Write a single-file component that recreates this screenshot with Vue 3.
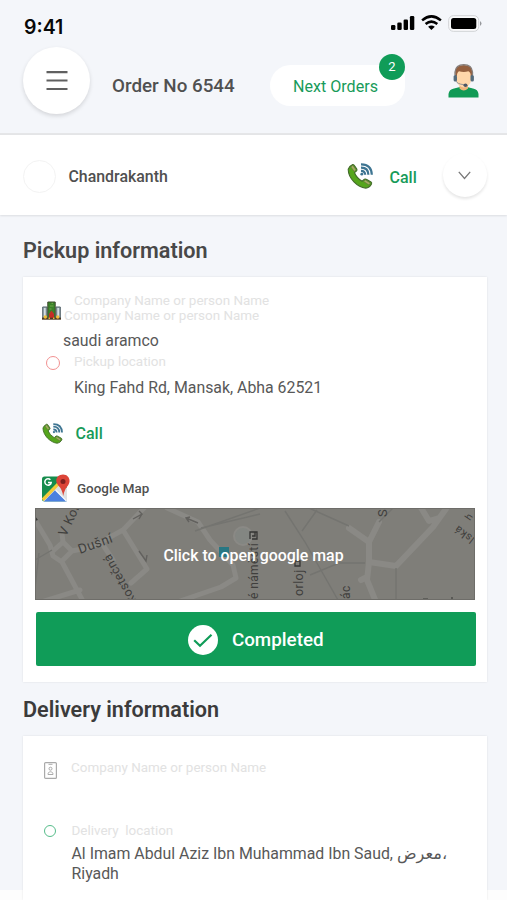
<script setup>
import { h } from 'vue'

const bars = [[0, 10, 5], [6.3, 7.5, 7.5], [12.6, 4.5, 10.5], [18.9, 1, 14]]

// Handset with radiating signal arcs, shared by both call buttons
const PhoneIcon = () =>
  h('svg', { viewBox: '0 0 26 26', width: '100%', height: '100%' }, [
    h('path', {
      d: 'M1.2 6.2 Q2.4 2.9 5.7 1.5 Q6.8 1.3 7.6 2.7 L9.9 6.3 Q10.2 7.4 9.3 8.2 L7.5 9.7 Q9.5 14.8 15.1 18.2 L17.4 16.2 Q18.3 15.7 19.3 16.3 L24 18.9 Q25.1 19.7 24.5 21 Q22.3 25 18.8 25.1 C10.5 24.2 1.3 15.4 1.2 6.2 Z',
      fill: '#55a51c', stroke: '#426b2a', 'stroke-width': 1.1
    }),
    h('path', {
      d: 'M5.8 2.3 L9.1 6.8 L7.2 8.4 L3.8 3.9 Z M18.4 16.9 L23.4 20 L22 22 L16.7 18.5 Z',
      fill: '#a7ad63', stroke: '#59713b', 'stroke-width': 0.6
    }),
    h('path', {
      d: 'M14 1.3 Q24.5 1.2 24.8 11.8 M14 4.6 Q21.2 4.5 21.4 11.8 M14 7.8 Q18 7.9 18.2 11.8',
      fill: 'none', stroke: '#3e7592', 'stroke-width': 2.2
    }),
    h('circle', { cx: 14.8, cy: 11.2, r: 1.4, fill: '#3e7592' })
  ])
</script>

<template>
  <div class="screen">
    <header class="header">
      <div class="status">
        <span class="time">9:41</span>
        <div class="status-icons">
          <svg width="24" height="16" viewBox="0 0 24 16">
            <rect v-for="b in bars" :key="b[0]" :x="b[0]" :y="b[1]" width="4.4" :height="b[2]" rx="1.3" />
          </svg>
          <svg class="wifi" width="21" height="16" viewBox="0 0 21 16" fill="none" stroke="#000" stroke-width="2.5">
            <path d="M1.1 5.4 Q10.4 -2.6 19.9 5.4" />
            <path d="M4.6 9 Q10.4 4.2 16.3 9" />
            <path d="M7.1 11.7 Q10.4 9.1 13.8 11.7 L10.4 15.1 Z" fill="#000" stroke="none" />
          </svg>
          <svg class="battery" width="34" height="17" viewBox="0 0 34 17">
            <rect x=".7" y=".7" width="30" height="15.6" rx="4.6" fill="#fafbfc" stroke="#d0d2d5" />
            <rect x="3" y="3" width="25.3" height="11" rx="2.5" />
            <path d="M32 6 Q35 8.5 32 11Z" fill="#96989c" />
          </svg>
        </div>
      </div>
      <div class="toolbar">
        <button class="menu">
          <svg width="22" height="20" viewBox="0 0 22 20" stroke="#606060" stroke-width="2.2">
            <path d="M.5 1.2H21.5M.5 9.5H21.5M.5 18H21.5" />
          </svg>
        </button>
        <h1 class="order">Order No 6544</h1>
        <button class="next">Next Orders<span class="badge">2</span></button>
        <svg class="agent" width="31" height="35" viewBox="0 0 31 35">
          <path d="M.5 33.5 V30 Q1 25.2 6 24.4 L12 23 H19 L25 24.4 Q30 25.2 30.5 30 V33.5Z" fill="#109a55" />
          <path d="M11.5 20H20V24.5Q15.7 28.5 11.5 24.5Z" fill="#edb57c" />
          <path d="M8 10 Q8 3 15.8 3 Q23.5 3 23.5 10 V15 Q22 23 15.8 23.5 Q9.6 23 8 15Z" fill="#ffd7aa" />
          <path d="M7.2 12 V7 Q8 1.2 15.8 1 Q23.5 1.2 24.3 7 V12 L22.7 12 Q22.8 8.2 20.4 7.3 Q15.8 8.5 11 7.3 Q9 8.2 8.9 12Z" fill="#95603f" />
          <path d="M7 11 V8 Q7.7 .8 15.8 .7 Q23.8 .8 24.5 8 V11" fill="none" stroke="#857e7b" stroke-width="1.3" />
          <rect x="5.6" y="11" width="3.4" height="6.6" rx="1.5" fill="#536b7c" />
          <rect x="22.5" y="11" width="3.4" height="6.6" rx="1.5" fill="#536b7c" />
          <path d="M8 17 Q9 20 16 20.7" fill="none" stroke="#939394" />
          <ellipse cx="17.5" cy="21.2" rx="2" ry="1.8" fill="#4c5564" />
        </svg>
      </div>
    </header>

    <section class="customer">
      <span class="avatar"></span>
      <span class="customer-name">Chandrakanth</span>
      <span class="phone-lg"><PhoneIcon /></span>
      <span class="call call-top">Call</span>
      <button class="expand">
        <svg width="13" height="9" viewBox="0 0 13 9" fill="none" stroke="#777" stroke-width="1.3"><path d="M.8 .8 6.5 7.4 12.2 .8" /></svg>
      </button>
    </section>

    <main class="content">
      <h2 class="title pickup-title">Pickup information</h2>
      <section class="card pickup">
        <div class="company">
          <svg class="building" width="19" height="19" viewBox="0 0 19 19">
            <path d="M.7 6H5V17H.7ZM14 6H18.3V17H14Z" fill="#9babb0" stroke="#52626a" />
            <path d="M2.8 7V15M16.2 7V15" stroke="#e0e7eb" stroke-width="1.3" />
            <path d="M5.8 1H13.2V17H5.8Z" fill="#398329" stroke="#3d482c" />
            <path d="M9.5 2.3H11M8 5H11.5M7.5 8H9.5" stroke="#76a74a" />
            <path d="M7 17V13L9.5 9.5 12 13V17Z" fill="#c52d25" />
            <path d="M0 17.7H19" stroke="#4d3923" stroke-width="2" />
            <circle cx="3.3" cy="16" r="1.7" fill="#f2bf37" /><circle cx="15.7" cy="16" r="1.7" fill="#f2bf37" />
            <path d="M6.5 17.2H8M11 17.2H12.5" stroke="#e9b633" stroke-width="1.4" />
          </svg>
          <div class="company-text">
            <p class="hint first">Company Name or person Name</p>
            <p class="hint second">Company Name or person Name</p>
            <p class="value company-name">saudi aramco</p>
          </div>
        </div>
        <div class="location">
          <span class="ring red"></span>
          <div>
            <p class="hint pickup-hint">Pickup location</p>
            <p class="value address">King Fahd Rd, Mansak, Abha 62521</p>
          </div>
        </div>
        <div class="call-row"><span class="phone-sm"><PhoneIcon /></span><span class="call">Call</span></div>
        <div class="map-label">
          <svg width="28" height="28" viewBox="0 0 28 28">
            <rect y="2.5" width="25" height="25" rx="2.5" fill="#168c4c" />
            <path d="M1 27 19 8 25 14V25.5Q25 27.5 23 27.5H2Z" fill="#dfe1e2" />
            <path d="M1.8 27.5 13.5 15.7 25 27.5Z" fill="#4b80df" />
            <path d="M.7 25.8 17 9.2" stroke="#f4cb38" stroke-width="3.2" />
            <path d="M13.5 16 24.5 27.2" stroke="#fff" stroke-width="1.2" />
            <path d="M8.4 5.8A3.2 3.2 0 1 0 9.2 8.5H6" fill="none" stroke="#fff" stroke-width="1.5" />
            <path d="M21.2 22Q20.2 15.2 16.3 11.4C11.8 6.5 15.3.5 21 .5S29.5 6.5 26 11.4Q22.3 15.5 21.2 22Z" fill="#dc4438" />
            <circle cx="21" cy="7.5" r="2.5" fill="#80201f" />
          </svg>
          <span>Google Map</span>
        </div>
        <div class="map">
          <svg width="440" height="92" viewBox="0 0 440 92">
            <rect width="440" height="92" fill="#7f7e79" />
            <g fill="none" stroke="#8a8985" stroke-linecap="round" stroke-linejoin="round">
              <path stroke-width="5" d="M0 12 15 37 18 48 27 54 49 95M27 53 37 43 57 39 88 22 112-3M37 43 28 34 18 43M28 34 27 26M88 22 112 61 96 75M3 95 45 82M132 0 163 14 175 32 198 57 201 70 186 79 145 93M68 37 78 52" />
              <path stroke-width="6" d="M314 20 334 34 344 14M334 34V54L361 58 398 19 413-2M334 54 332 72 341 94M332 69 326 72M385-2 394 13 404 10" />
              <circle cx="208" cy="28" r="9" stroke-width="2" fill="#838682" />
            </g>
            <g fill="none" stroke="#747470" stroke-width="1.4">
              <path d="M0 52 17 42M4 45 0 80M160 23 225 0M166 20 225 6M250 3 270 34 303 92M275 67 304 55H330M274 0 314 18M361 60V92M282 2 267 23M344 14 358 0" />
              <path d="M98 11 107 6 104 3M107 6 104 11M104 43 111 53 112 47M151 10 163 15M155 9 151 10 154 14" stroke="#62615e" />
            </g>
            <path d="M0 8 3 12 0 13Z" fill="#383836" />
            <path d="M184 39H194V49H184Z" fill="#287783" />
            <g class="map-text" fill="#3f3f3d">
              <text transform="translate(31 29) rotate(-65)" font-size="13">V Kol</text>
              <text transform="translate(45 46) rotate(-20)" font-size="13.5">Dušní</text>
              <text transform="translate(75 45) rotate(-119)" font-size="12.5" text-anchor="end">kostečná</text>
              <text transform="translate(223 91) rotate(-90)" font-size="12">é náměstí</text>
              <text transform="translate(268 88) rotate(-90)" font-size="12.5">orloj</text>
              <text transform="translate(315 91) rotate(-90)" font-size="12">ác</text>
              <text transform="translate(352 9) rotate(-90)" font-size="13">S</text>
              <text transform="translate(423 17) rotate(-143)" font-size="11" text-anchor="end">lská</text>
              <text transform="translate(435 13) rotate(-55)" font-size="10">h</text>
            </g>
            <path d="M215 31V24H222V31H217M217 28H220V24M260 53H265V58H260Z" fill="none" stroke="#353533" stroke-width="1.3" />
            <path d="M370 91.5H375M388 91H393M405 91.5H408M417 91V89" stroke="#41413e" stroke-width="1.2" />
            <rect x=".5" y=".5" width="439" height="91" fill="none" stroke="#6e6d69" />
          </svg>
          <span class="map-caption">Click to open google map</span>
        </div>
        <button class="completed">
          <svg width="30" height="30" viewBox="0 0 30 30"><circle cx="15" cy="15" r="15" fill="#fff" /><path d="M6.2 15.2 12 20.8 23.5 9.8" fill="none" stroke="#109c58" stroke-width="2.2" /></svg>
          <span>Completed</span>
        </button>
      </section>

      <h2 class="title delivery-title">Delivery information</h2>
      <section class="card delivery">
        <div class="person">
          <svg width="13" height="17" viewBox="0 0 13 17" fill="none" stroke="#aaa">
            <rect x=".6" y=".6" width="11.8" height="15.8" rx="1" stroke-width="1.2" />
            <path d="M4.5 2.3H8.5" /><circle cx="6.5" cy="6.7" r="1.5" /><path d="M4 12.5V11.3Q6.5 8.2 9 11.3V12.5Z" />
          </svg>
          <p class="hint">Company Name or person Name</p>
        </div>
        <div class="destination">
          <span class="ring green"></span>
          <div>
            <p class="hint delivery-hint">Delivery&nbsp; location</p>
            <p class="value delivery-address">Al Imam Abdul Aziz Ibn Muhammad Ibn Saud, <span class="arabic">معرض</span>،<br />Riyadh</p>
          </div>
        </div>
      </section>
    </main>
  </div>
</template>

<style>
body { background: #fff; }
</style>
<style scoped>
* { box-sizing: border-box; }
.screen { width: 507px; height: 900px; overflow: hidden; background: linear-gradient(#f4f6fa 890px, #fdfdfd 890px); font-family: Roboto, "Noto Sans", sans-serif; color: #505050; }
h1, h2, p { margin: 0; white-space: nowrap; }
button { border: 0; padding: 0; font-family: inherit; background: #fff; display: flex; align-items: center; justify-content: center; }
svg { display: block; flex: none; }
.header { height: 135px; border-bottom: 2px solid #e5e6e8; }
.status { height: 47px; display: flex; justify-content: space-between; padding: 14px 25px 0 24px; }
.time { font: 600 19.5px/26px Inter, sans-serif; color: #080808; }
.status-icons { display: flex; align-items: flex-start; padding-top: 1px; }
.wifi { margin-left: 6px; }
.battery { margin-left: 6px; }
.toolbar { display: flex; align-items: center; height: 67px; padding-left: 23px; }
.menu { width: 67px; height: 67px; border-radius: 50%; box-shadow: 0 2px 4px #0002; }
.order { font-size: 18.8px; font-weight: 500; line-height: 24px; width: 158px; margin: 11px 0 0 22px; }
.next { position: relative; width: 135px; height: 41px; margin-top: 10px; padding: 2px 4px 0 0; border-radius: 21px 12px 20px 21px; color: #189b5a; font-size: 16.1px; white-space: nowrap; }
.badge { position: absolute; right: 0; top: -11px; width: 26px; height: 26px; border-radius: 50%; background: #109c58; color: #fff; font-size: 13px; line-height: 26px; text-align: center; }
.agent { margin: 2px 0 0 42.5px; }
.customer { height: 80px; background: #fff; box-shadow: 0 1px 2px #0000001a; display: flex; align-items: center; padding: 2px 20px 0 23px; }
.avatar { width: 33px; height: 33px; border-radius: 50%; border: 1px solid #f3f3f3; }
.customer-name { font-size: 15.9px; font-weight: 500; width: 278px; margin-left: 12.5px; }
.phone-lg { width: 26px; height: 26px; margin-bottom: 1px; }
.call { font-size: 16px; font-weight: 500; color: #189b5a; }
.call-top { width: 53px; margin: 2px 0 0 17px; }
.expand { width: 44px; height: 44px; margin-bottom: 2px; border-radius: 50%; box-shadow: 0 2px 3px #0000001a; }
.content { padding: 0 20px 0 23px; }
.title { font-size: 21.6px; line-height: 28px; font-weight: 600; color: #484848; }
.pickup-title { padding: 22px 0 12px; }
.card { width: 464px; background: #fff; box-shadow: 0 0 2px #0000001a; }
.pickup { height: 405px; padding: 16px 12px 0; }
.company { display: flex; }
.building { margin: 8px 0 0 7px; }
.company-text { margin-left: 3px; }
.hint { font-size: 13.45px; line-height: 15px; color: #e2e2e2; }
.first { padding-left: 10px; }
.value { font-size: 15.87px; color: #585858; }
.company-name { line-height: 24px; margin-top: 6px; margin-left: -1px; }
.location { display: flex; padding-left: 11px; gap: 14px; margin-top: 1px; }
.ring { width: 14px; height: 14px; border: 1.4px solid #f29191; border-radius: 50%; margin-top: 2px; }
.address { line-height: 22px; margin-top: 8px; }
.call-row { display: flex; align-items: center; height: 24px; margin: 22px 0 0 7px; gap: 12.5px; }
.phone-sm { width: 21px; height: 21px; }
.map-label { display: flex; align-items: center; height: 28px; margin: 29px 0 0 7px; gap: 7px; font-size: 13.4px; font-weight: 500; }
.map { position: relative; width: 440px; height: 92px; margin-top: 6px; }
.map-text { font-family: Roboto, sans-serif; letter-spacing: .4px; }
.map-caption { position: absolute; inset: 0; display: flex; align-items: center; justify-content: center; padding: 3px 3px 0 0; color: #fff; font-size: 15.9px; font-weight: 500; }
.completed { width: 440px; height: 54px; margin: 12px 0 0 1px; padding-top: 1px; gap: 13.5px; border-radius: 2px; background: #109c58; color: #fff; font-size: 18.8px; font-weight: 500; }
.delivery-title { padding: 14px 0 12px; color: #3b3b3b; }
.delivery { height: 164px; padding-top: 24px; }
.person { display: flex; height: 61px; padding-left: 21px; gap: 14px; }
.person svg { margin-top: 2px; }
.destination { display: flex; padding-left: 21px; gap: 15.5px; }
.green { width: 12px; height: 12px; border-color: #57bd8b; margin-top: 4px; }
.delivery-hint { padding-top: 2px; }
.delivery-address { line-height: 19.5px; margin-top: 6px; }
.arabic { font-family: "DejaVu Sans", sans-serif; font-size: 16.2px; line-height: 1; }
</style>
